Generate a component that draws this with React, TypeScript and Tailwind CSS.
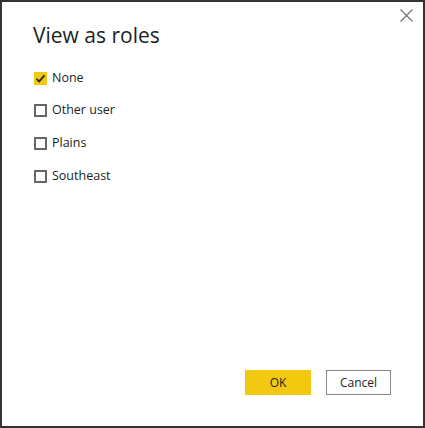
import { useState } from "react";

const roles = ["None", "Other user", "Plains", "Southeast"];

function CheckBox({ checked }: { checked: boolean }) {
  if (checked) {
    return (
      <span className="flex h-[13px] w-[13px] shrink-0 items-center justify-center bg-[#f2c811]">
        <svg width="11" height="11" viewBox="0 0 11 11" fill="none">
          <path d="M1.5 5.8 L4.2 8.4 L9.5 2.4" stroke="#252423" strokeWidth="1.7" />
        </svg>
      </span>
    );
  }
  return <span className="h-[13px] w-[13px] shrink-0 border-2 border-[#666666] bg-white" />;
}

export default function App() {
  const [selected, setSelected] = useState("None");

  return (
    <div
      className="flex h-[428px] w-[425px] flex-col border-2 border-[#333333] bg-white text-[#201f1e]"
      style={{ fontFamily: '"Segoe UI", "Open Sans", sans-serif' }}
    >
      <div className="flex items-start justify-between">
        <h1 className="pl-[31px] pt-[19px] text-[21px] leading-[28px]">View as roles</h1>
        <button className="mr-[10px] mt-[7px] flex h-[13px] w-[13px] items-center justify-center">
          <svg width="13" height="13" viewBox="0 0 13 13">
            <path d="M0.5 0.5 L12.5 12.5 M12.5 0.5 L0.5 12.5" stroke="#707070" strokeWidth="1.1" />
          </svg>
        </button>
      </div>

      <div className="mt-[19px] flex flex-col gap-[12.7px] pl-[32px]">
        {roles.map((role) => (
          <label
            key={role}
            className="flex h-5 cursor-pointer items-center gap-[5px] text-[12.5px]"
            onClick={() => setSelected(role)}
          >
            <CheckBox checked={selected === role} />
            <span>{role}</span>
          </label>
        ))}
      </div>

      <div className="mt-auto flex justify-end gap-[15px] pb-[31px] pr-[32px]">
        <button className="h-[25px] w-[66px] bg-[#f2c811] text-[12px] text-[#252423]">OK</button>
        <button className="h-[25px] w-[65px] border border-[#8a8886] bg-white text-[12px] text-[#252423]">
          Cancel
        </button>
      </div>
    </div>
  );
}
